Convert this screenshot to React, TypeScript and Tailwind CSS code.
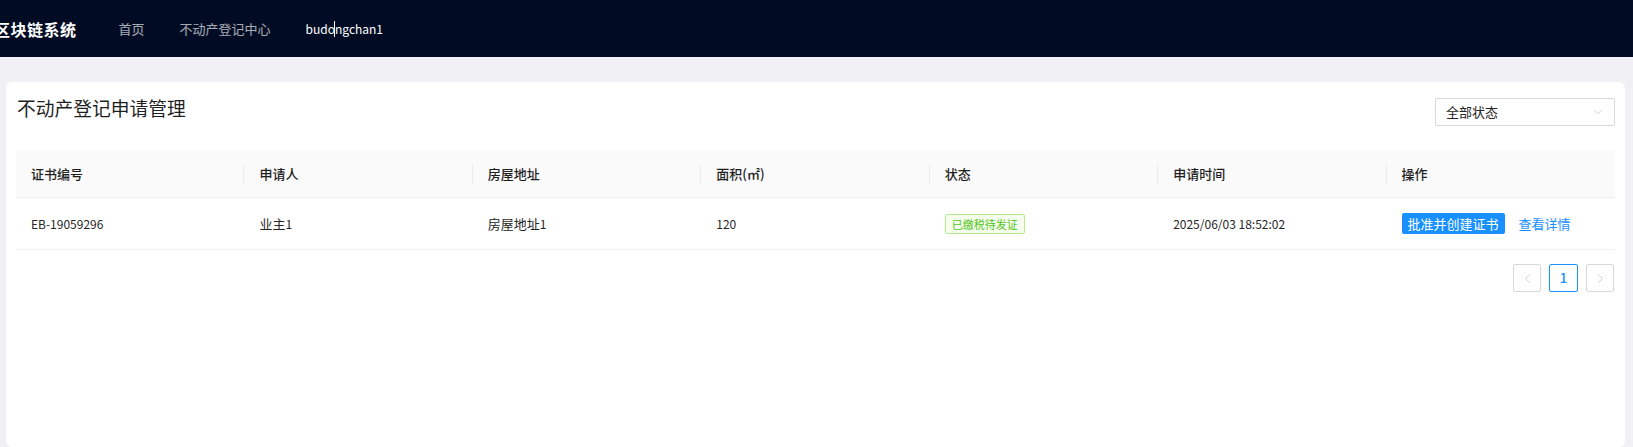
import { ChevronDown, ChevronLeft, ChevronRight } from "lucide-react";

const columns = ["证书编号", "申请人", "房屋地址", "面积(㎡)", "状态", "申请时间", "操作"];

const rows = [
  {
    id: "EB-19059296",
    owner: "业主",
    address: "房屋地址",
    area: "120",
    status: "已缴税待发证",
    time: "2025/06/03 18:52:02",
  },
];

// latin text in the reference runs a bit narrower than the CJK around it
function Latin({ children }: { children: React.ReactNode }) {
  return <span className="text-[12px]">{children}</span>;
}

function Header() {
  return (
    <header className="h-[57px] shrink-0 bg-[#010c24] flex items-center">
      <div className="-ml-[6px] text-[16px] font-bold text-white tracking-[0.5px]">区块链系统</div>
      <nav className="ml-[42px] flex items-center gap-[35px] text-[13px]">
        <span className="text-white/65">首页</span>
        <span className="text-white/65">不动产登记中心</span>
        <span className="text-white text-[12px] flex items-center">
          budo
          <span className="inline-block w-px h-[16px] bg-white -ml-[1px]" />
          ngchan1
        </span>
      </nav>
    </header>
  );
}

export default function App() {
  return (
    <div className="h-screen flex flex-col bg-[#f0f0f5] font-['Noto_Sans_CJK_SC','Noto_Sans',sans-serif] overflow-hidden">
      <Header />
      <main className="flex-1 flex flex-col px-[6px] pt-[25px] pr-[8px]">
        <div className="flex-1 bg-white rounded-[6px] px-[10px] pt-[12px]">
          <div className="flex items-start justify-between">
            <h1 className="h-[28px] leading-[28px] pl-[1px] text-[18.75px] text-[#1f1f1f]">不动产登记申请管理</h1>
            <div className="mt-[4px] w-[180px] h-[28px] border border-[#d9d9d9] rounded-[2px] flex items-center justify-between pl-[10px] pr-[9px]">
              <span className="text-[13px] text-[#262626]">全部状态</span>
              <ChevronDown className="w-[14px] h-[14px] text-[#bfbfbf]" strokeWidth={1.25} />
            </div>
          </div>

          <div className="mt-[24px]">
            <div className="grid grid-cols-7 h-[48px] bg-[#fafafa] border-b border-[#f0f0f0] rounded-t-[2px]">
              {columns.map((c, i) => (
                <div key={c} className="relative flex items-center px-[15px] text-[13px] font-medium text-[#1f1f1f]">
                  {c}
                  {i < columns.length - 1 && (
                    <span className="absolute right-0 top-1/2 -translate-y-1/2 h-[21px] w-px bg-[#ececec]" />
                  )}
                </div>
              ))}
            </div>

            {rows.map((r) => (
              <div key={r.id} className="grid grid-cols-7 h-[52px] border-b border-[#f0f0f0] text-[13px] text-[#262626]">
                <div className="flex items-center px-[15px]">
                  <Latin>{r.id}</Latin>
                </div>
                <div className="flex items-center px-[15px]">
                  {r.owner}
                  <Latin>1</Latin>
                </div>
                <div className="flex items-center px-[15px]">
                  {r.address}
                  <Latin>1</Latin>
                </div>
                <div className="flex items-center px-[15px]">
                  <Latin>{r.area}</Latin>
                </div>
                <div className="flex items-center px-[15px]">
                  <span className="h-[20px] leading-[18px] px-[6px] border border-[#b7eb8f] bg-[#f6ffed] text-[#52c41a] text-[11px] rounded-[2px]">
                    {r.status}
                  </span>
                </div>
                <div className="flex items-center px-[15px]">
                  <Latin>{r.time}</Latin>
                </div>
                <div className="flex items-center px-[15px] gap-[14px]">
                  <button className="h-[21px] px-[6px] bg-[#1890ff] text-white text-[13px] rounded-[2px] leading-[21px]">
                    批准并创建证书
                  </button>
                  <span className="text-[#1890ff]">查看详情</span>
                </div>
              </div>
            ))}

            <div className="flex justify-end gap-[8px] mt-[14px] pr-[1px]">
              <div className="w-[28px] h-[28px] border border-[#d9d9d9] rounded-[2px] flex items-center justify-center">
                <ChevronLeft className="w-[15px] h-[15px] text-[#bfbfbf]" strokeWidth={1.25} />
              </div>
              <div className="w-[29px] h-[28px] border border-[#1890ff] rounded-[2px] flex items-center justify-center text-[13px] font-medium text-[#1890ff]">
                1
              </div>
              <div className="w-[28px] h-[28px] border border-[#d9d9d9] rounded-[2px] flex items-center justify-center">
                <ChevronRight className="w-[15px] h-[15px] text-[#bfbfbf]" strokeWidth={1.25} />
              </div>
            </div>
          </div>
        </div>
      </main>
    </div>
  );
}
